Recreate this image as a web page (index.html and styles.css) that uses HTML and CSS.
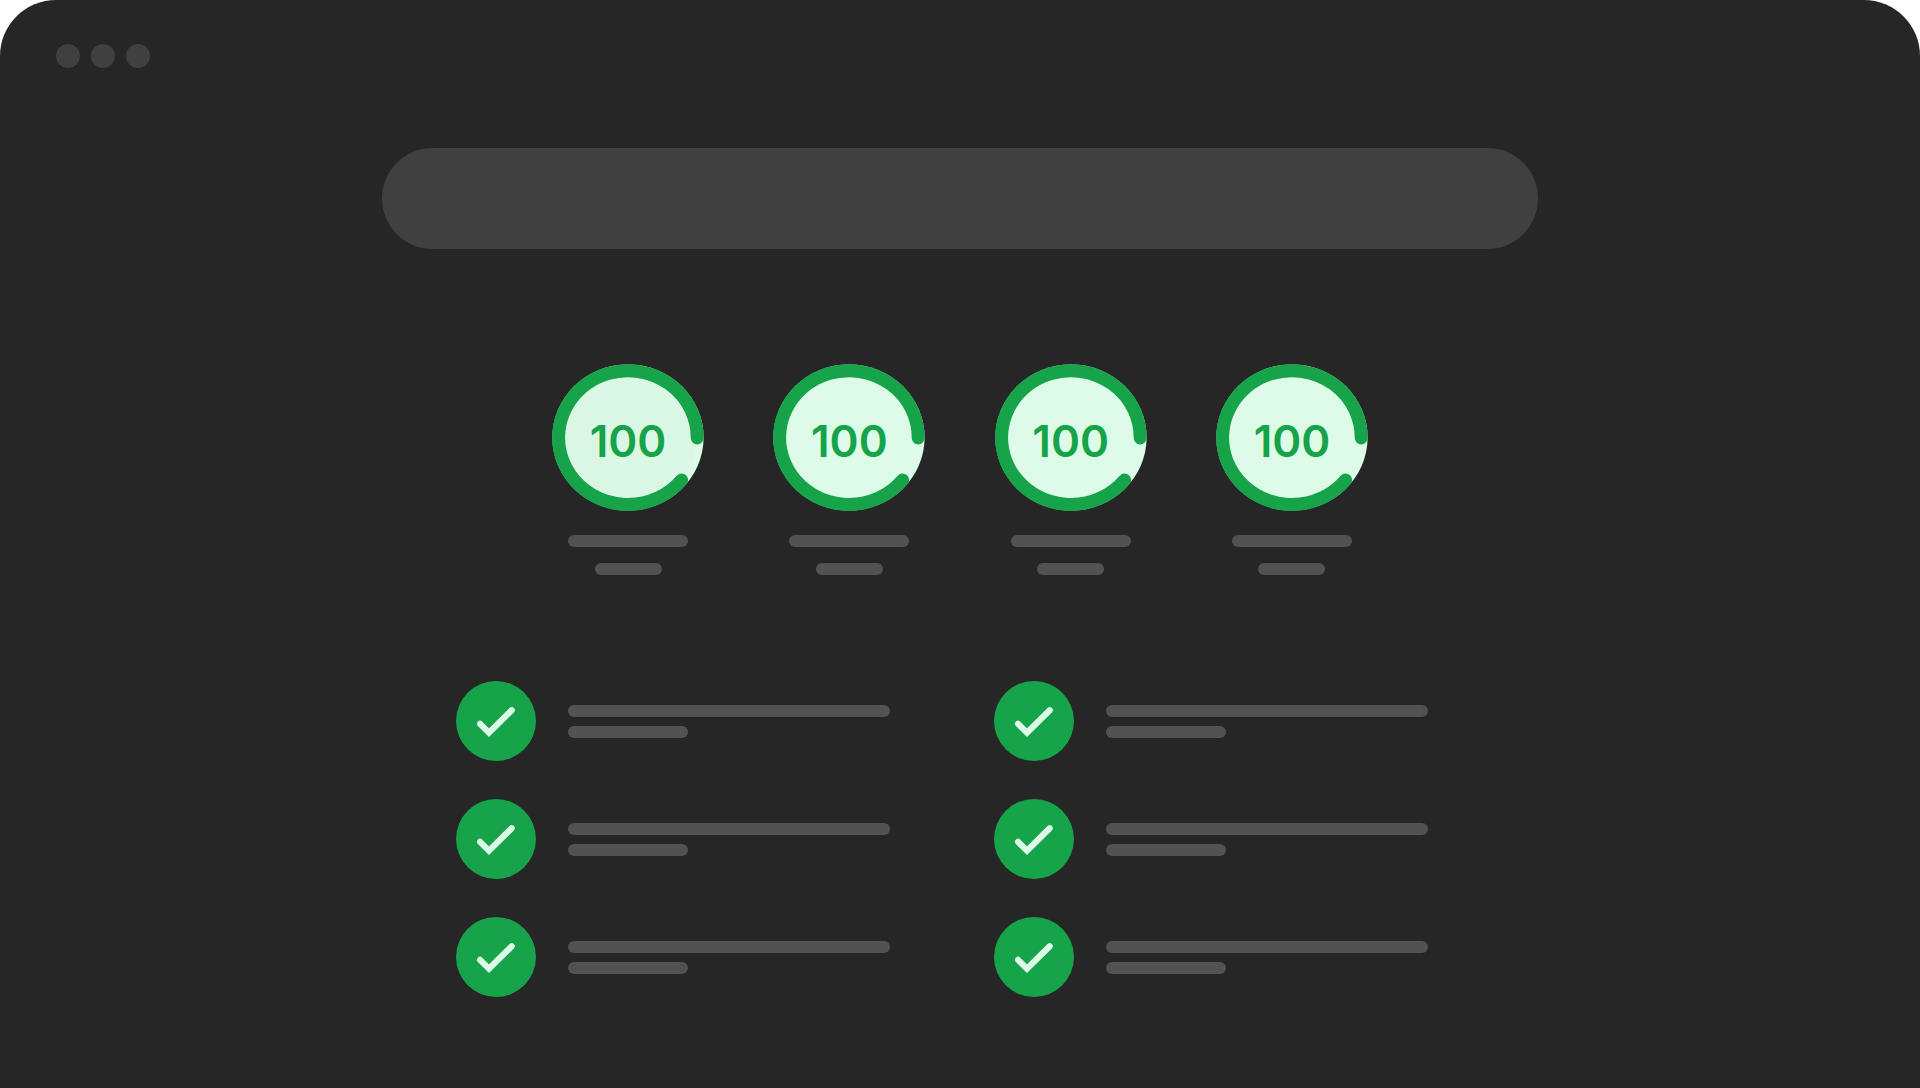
FILE: index.html
```html
<!doctype html>
<html lang="en">
<head>
<meta charset="utf-8">
<title>Site audit</title>
<link rel="stylesheet" href="styles.css">
</head>
<body>
<svg class="defs" aria-hidden="true">
    <symbol id="ring" viewBox="0 0 152 147">
        <ellipse cx="76" cy="73.5" rx="75.6" ry="73.1" fill="#dcfce7"/>
        <ellipse class="face" cx="76" cy="73.5" rx="69" ry="67"/>
        <path d="M145.2 74A69.3 66.9 0 1 0 129.6 115.9" fill="none" stroke="#16a34a" stroke-width="13" stroke-linecap="round"/>
    </symbol>
    <symbol id="check" viewBox="0 0 80 80">
        <path d="M24.1 42.9L33 51.6L55.7 29.2" fill="none" stroke="#dcfce7" stroke-width="6.2" stroke-linecap="round"/>
    </symbol>
</svg>

<div class="window">
    <header class="titlebar">
        <span class="dot"></span>
        <span class="dot"></span>
        <span class="dot"></span>
    </header>

    <main class="content">
        <div class="searchbar"></div>

        <section class="scores">
            <div class="score">
                <div class="gauge tinted"><svg><use href="#ring"/></svg><span class="value">100</span></div>
                <div class="line medium"></div>
                <div class="line short"></div>
            </div>
            <div class="score">
                <div class="gauge"><svg><use href="#ring"/></svg><span class="value">100</span></div>
                <div class="line medium"></div>
                <div class="line short"></div>
            </div>
            <div class="score">
                <div class="gauge"><svg><use href="#ring"/></svg><span class="value">100</span></div>
                <div class="line medium"></div>
                <div class="line short"></div>
            </div>
            <div class="score">
                <div class="gauge"><svg><use href="#ring"/></svg><span class="value">100</span></div>
                <div class="line medium"></div>
                <div class="line short"></div>
            </div>
        </section>

        <ul class="checks">
            <li class="check">
                <svg class="badge"><use href="#check"/></svg>
                <div class="lines"><div class="line"></div><div class="line medium"></div></div>
            </li>
            <li class="check">
                <svg class="badge"><use href="#check"/></svg>
                <div class="lines"><div class="line"></div><div class="line medium"></div></div>
            </li>
            <li class="check">
                <svg class="badge"><use href="#check"/></svg>
                <div class="lines"><div class="line"></div><div class="line medium"></div></div>
            </li>
            <li class="check">
                <svg class="badge"><use href="#check"/></svg>
                <div class="lines"><div class="line"></div><div class="line medium"></div></div>
            </li>
            <li class="check">
                <svg class="badge"><use href="#check"/></svg>
                <div class="lines"><div class="line"></div><div class="line medium"></div></div>
            </li>
            <li class="check">
                <svg class="badge"><use href="#check"/></svg>
                <div class="lines"><div class="line"></div><div class="line medium"></div></div>
            </li>
        </ul>
    </main>
</div>
</body>
</html>
```
FILE: styles.css
```css
*{
    box-sizing: border-box;
}
body{
    margin: 0;
    background-color: white;
    font-family: Inter, "Liberation Sans", sans-serif;
}
.defs{
    display: none;
}
.window{
    min-height: 100vh;
    padding: 44px 56px;
    border-radius: 56px 56px 0 0;
    background-color: #262626;
}

.titlebar{
    display: flex;
    gap: 11px;
}
.dot{
    width: 24px;
    height: 24px;
    border-radius: 50%;
    background-color: #404040;
}

.content{
    max-width: 1156px;
    margin: 80px auto 0;
}
.searchbar{
    height: 101px;
    border-radius: 51px;
    background-color: #404040;
}

.line{
    width: 100%;
    height: 12px;
    border-radius: 6px;
    background-color: #525252;
}
.line.medium{
    width: 120px;
}
.line.short{
    width: 67px;
}

.scores{
    display: flex;
    justify-content: space-between;
    margin-top: 115px;
    padding: 0 170px;
}
.score{
    display: flex;
    flex-direction: column;
    align-items: center;
    gap: 16px;
}
.gauge{
    --face: #dcfce7;
    display: grid;
    place-items: center;
    width: 152px;
    height: 147px;
    margin-bottom: 8px;
}
.gauge.tinted{
    --face: #daf7e3;
}
.gauge svg, .value{
    grid-area: 1 / 1;
}
.gauge svg{
    width: 100%;
    height: 100%;
}
.face{
    fill: var(--face);
}
.value{
    padding-top: 6px;
    color: #16a34a;
    font-size: 44px;
    font-weight: 600;
    line-height: 48px;
}

.checks{
    display: grid;
    grid-template-columns: 1fr 1fr;
    gap: 38px 104px;
    margin: 106px 0 0;
    padding: 0 110px 0 74px;
    list-style: none;
}
.check{
    display: flex;
    align-items: center;
    gap: 32px;
}
.badge{
    flex: none;
    width: 80px;
    height: 80px;
    border-radius: 50%;
    background-color: #16a34a;
}
.lines{
    display: grid;
    flex: 1;
    gap: 9px;
}
```
